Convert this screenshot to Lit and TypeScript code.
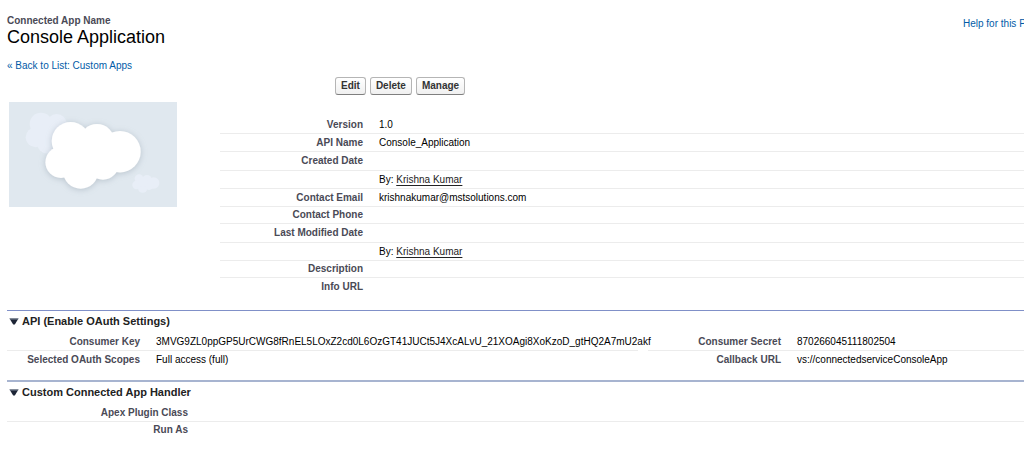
import { LitElement, html, css, svg } from "lit";
import { customElement, property, state } from "lit/decorators.js";

type Row = { label: string; kind?: "date" | "empty"; value?: string; by?: string };

const details: Row[] = [
  { label: "Version", value: "1.0" },
  { label: "API Name", value: "Console_Application" },
  { label: "Created Date", kind: "date" },
  { label: "", by: "Krishna Kumar" },
  { label: "Contact Email", value: "krishnakumar@mstsolutions.com" },
  { label: "Contact Phone", kind: "empty" },
  { label: "Last Modified Date", kind: "date" },
  { label: "", by: "Krishna Kumar" },
  { label: "Description", kind: "empty" },
  { label: "Info URL" },
];

const keyRows: Row[] = [
  { label: "Consumer Key", value: "3MVG9ZL0ppGP5UrCWG8fRnEL5LOxZ2cd0L6OzGT41JUCt5J4XcALvU_21XOAgi8XoKzoD_gtHQ2A7mU2akf" },
  { label: "Selected OAuth Scopes", value: "Full access (full)" },
];

const secretRows: Row[] = [
  { label: "Consumer Secret", value: "870266045111802504" },
  { label: "Callback URL", value: "vs://connectedserviceConsoleApp" },
];

const handlerRows: Row[] = [
  { label: "Apex Plugin Class", kind: "empty" },
  { label: "Run As", kind: "empty" },
];

const puffs = (list: number[][]) => list.map(([x, y, r]) => svg`<circle cx=${x} cy=${y} r=${r}></circle>`);

@customElement("app-section")
class AppSection extends LitElement {
  @property() heading = "";
  @state() open = true;

  static styles = css`
    :host { display: block; border-top: 2px solid #a7b4d0; }
    .title { margin: 0; font-size: 11px; line-height: 21px; }
    .toggle {
      display: flex; align-items: center; gap: 3px; padding: 0 0 0 2px; border: 0;
      background: none; font: inherit; color: #222; cursor: pointer;
    }
    .arrow { width: 10px; height: 7px; }
    .closed { transform: rotate(-90deg); }
  `;

  render() {
    return html`
      <h2 class="title">
        <button class="toggle" aria-expanded=${this.open} @click=${() => (this.open = !this.open)}>
          <svg class="arrow ${this.open ? "" : "closed"}" viewBox="0 0 10 7" aria-hidden="true">
            <path d="M.5 .5H9.5L5.8 6.5H4.2Z" fill="#1d2536"></path>
            <path d="M.5 .5H9.5L9 1.4H1Z" fill="#7d8798"></path>
          </svg>
          <span>${this.heading}</span>
        </button>
      </h2>
      ${this.open ? html`<slot></slot>` : ""}
    `;
  }
}

@customElement("app-root")
class AppRoot extends LitElement {
  static styles = css`
    :host {
      display: block; background: #fff; color: #000; overflow: hidden;
      font-family: "Liberation Sans", Arial, sans-serif; font-size: 10px; line-height: 12px;
    }
    .page { padding: 15px 0 10px 7px; }
    .head { display: flex; justify-content: space-between; align-items: flex-start; }
    .title { margin: 0; font-weight: normal; font-size: 10px; }
    .kind { display: block; font-weight: bold; color: #4a4a56; }
    .name { display: block; font-size: 18px; line-height: 20px; }
    a { color: #015ba7; text-decoration: none; }
    .help { width: 61px; padding-top: 3px; overflow: hidden; white-space: nowrap; }
    .back { display: block; padding-top: 13px; }
    .actions { display: flex; gap: 4px; padding: 5px 0 7px 328px; }
    .btn {
      height: 18px; padding: 0 5px; border: 1px solid #b5b5b5; border-bottom-color: #7f7f7f;
      border-radius: 3px; background: linear-gradient(#fff, #f0f0f0); color: #333;
      font: bold 10px/12px "Liberation Sans", Arial, sans-serif; cursor: pointer;
    }
    .overview { display: flex; align-items: flex-start; gap: 43px; padding-left: 2px; }
    .logo { flex: none; width: 168px; height: 105px; }
    .info { flex: 1; padding-top: 14px; }
    table { width: 100%; border-collapse: collapse; table-layout: fixed; }
    th, td { height: 17px; padding: 0; border-bottom: 1px solid #ececec; white-space: nowrap; vertical-align: middle; }
    .date th, .date td { height: 18px; }
    .empty th, .empty td { height: 16px; }
    tr:last-child th, tr:last-child td { border-bottom: 0; }
    th { width: 143px; text-align: right; color: #4a4a56; }
    td { padding-left: 16px; }
    td a { color: #222; text-decoration: underline; text-underline-offset: 2px; }
    .first { margin-top: 15px; border-top: 1px solid #8090c8; }
    .second { margin-top: 12px; }
    .oauth { display: grid; grid-template-columns: 631fr 376fr; gap: 10px; padding-top: 1px; }
    .oauth th { width: 133px; }
    .handler { padding-top: 2px; }
    .handler th { width: 181px; }
  `;

  table(rows: Row[], name: string) {
    return html`<table aria-label=${name}><tbody>${rows.map(
      (r) => html`<tr class=${r.kind ?? ""}>
        <th scope="row">${r.label}</th>
        <td>${r.by ? html`By: <a href="#">${r.by}</a>` : r.value}</td>
      </tr>`
    )}</tbody></table>`;
  }

  render() {
    return html`
      <main class="page">
        <header class="head">
          <h1 class="title">
            <span class="kind">Connected App Name</span>
            <span class="name">Console Application</span>
          </h1>
          <a class="help" href="#">Help for this Page</a>
        </header>
        <a class="back" href="#">« Back to List: Custom Apps</a>
        <div class="actions">
          <button class="btn">Edit</button>
          <button class="btn">Delete</button>
          <button class="btn">Manage</button>
        </div>
        <div class="overview">
          <svg class="logo" viewBox="0 0 168 105" role="img" aria-label="App logo">
            <defs>
              <filter id="shade" x="-20%" y="-20%" width="140%" height="140%">
                <feDropShadow dx="0" dy="1" stdDeviation="3" flood-color="#8795a3" flood-opacity=".45"></feDropShadow>
              </filter>
            </defs>
            <rect width="168" height="105" fill="#e0e8ef"></rect>
            <g fill="#e8eef7">
              ${puffs([[32, 22, 11.3], [47.7, 22, 10], [26.7, 35.3, 10], [38, 41.5, 10], [40, 32, 12]])}
              ${puffs([[130, 76.5, 4.3], [138, 77.5, 4.6], [144.7, 81, 5.7], [127.5, 83, 4.2], [133.7, 86, 4.8], [140, 83, 5], [134, 80, 5]])}
            </g>
            <g fill="#fff" filter="url(#shade)">
              ${puffs([[61.7, 39, 19], [88, 39.5, 17.5], [111, 49.7, 20.7], [52, 60.3, 15.6], [71.7, 69, 17.7], [94, 62, 15.7], [78, 54, 18]])}
            </g>
          </svg>
          <div class="info">${this.table(details, "App details")}</div>
        </div>
        <app-section class="first" heading="API (Enable OAuth Settings)">
          <div class="oauth">
            ${this.table(keyRows, "Consumer key")}
            ${this.table(secretRows, "Consumer secret")}
          </div>
        </app-section>
        <app-section class="second" heading="Custom Connected App Handler">
          <div class="handler">${this.table(handlerRows, "Handler")}</div>
        </app-section>
      </main>
    `;
  }
}
